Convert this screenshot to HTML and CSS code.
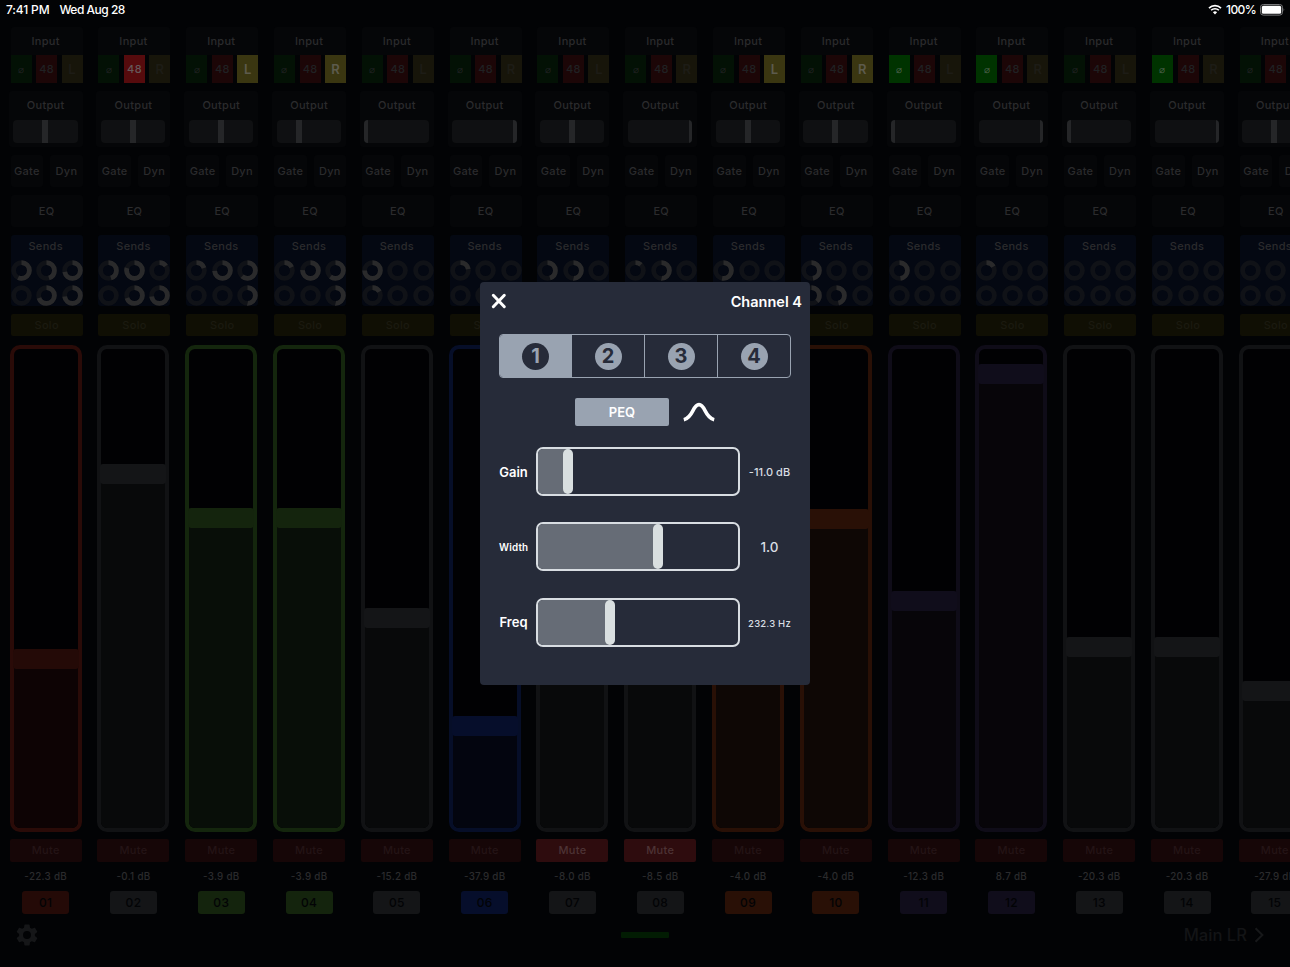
FILE: index.html
```html
<!DOCTYPE html>
<html lang="en">
<head>
    <meta charset="UTF-8">
    <meta name="viewport" content="width=device-width, initial-scale=1.0">
    <title>Mixer</title>
    <link rel="stylesheet" href="styles.css">
</head>
<body>
    <!-- Status bar -->
    <div class="status-bar">
        <span>7:41 PM</span>
        <span class="date">Wed Aug 28</span>
        <svg class="wifi" viewBox="0 0 14 11" width="14" height="11">
            <path d="M1 4.1 A8.6 8.6 0 0 1 13 4.1" fill="none" stroke="#fff" stroke-width="1.7"/>
            <path d="M3.1 6.3 A5.6 5.6 0 0 1 10.9 6.3" fill="none" stroke="#fff" stroke-width="1.6"/>
            <path d="M4.9 8.2 A3 3 0 0 1 9.1 8.2 L7 10.4 Z" fill="#fff"/>
        </svg>
        <span class="percent">100%</span>
        <svg viewBox="0 0 25 12" width="25" height="12">
            <rect x="0.5" y="0.5" width="22" height="10.6" rx="2.8" fill="none" stroke="#77787a"/>
            <rect x="1.8" y="1.8" width="19.4" height="8" rx="1.6" fill="#fff"/>
            <path d="M23.6 4 Q25 5.8 23.6 7.6 Z" fill="#77787a"/>
        </svg>
    </div>

    <!-- Channel strips -->
    <div class="mixer" id="mixer"></div>

    <div class="footer">
        <svg class="gear" viewBox="2 2 20 20" width="22" height="22">
            <path fill="#151618" d="M19.14 12.94c.04-.3.06-.61.06-.94 0-.32-.02-.64-.07-.94l2.03-1.58c.18-.14.23-.41.12-.61l-1.92-3.32c-.12-.22-.37-.29-.59-.22l-2.39.96c-.5-.38-1.03-.7-1.62-.94L14.4 2.81c-.04-.24-.24-.41-.48-.41h-3.84c-.24 0-.43.17-.47.41L9.25 5.35c-.59.24-1.13.57-1.62.94l-2.39-.96c-.22-.08-.47 0-.59.22L2.74 8.87c-.12.21-.08.47.12.61l2.03 1.58c-.05.3-.09.63-.09.94s.02.64.07.94l-2.03 1.58c-.18.14-.23.41-.12.61l1.92 3.32c.12.22.37.29.59.22l2.39-.96c.5.38 1.03.7 1.62.94l.36 2.54c.05.24.24.41.48.41h3.84c.24 0 .44-.17.47-.41l.36-2.54c.59-.24 1.13-.56 1.62-.94l2.39.96c.22.08.47 0 .59-.22l1.92-3.32c.12-.22.07-.47-.12-.61l-2.01-1.58zM12 15.6a3.6 3.6 0 1 1 0-7.2 3.6 3.6 0 0 1 0 7.2z"/>
        </svg>
        <div class="connection"></div>
        <div class="main-lr">
            <span>Main LR</span>
            <svg viewBox="0 0 10 16" width="10" height="16">
                <path d="M1.5 1.2 L8.4 8 L1.5 14.8" fill="none" stroke="#17181a" stroke-width="2"/>
            </svg>
        </div>
    </div>

    <!-- EQ popup -->
    <div class="modal">
        <div class="modal-header">
            <svg viewBox="0 0 16 16" width="16" height="16">
                <path d="M2.3 2.3 L13.3 13.7 M13.3 2.3 L2.3 13.7" stroke="#fff" stroke-width="3" stroke-linecap="round"/>
            </svg>
            <span>Channel 4</span>
        </div>
        <div class="bands">
            <div class="band active"><span>1</span></div>
            <div class="band"><span>2</span></div>
            <div class="band"><span>3</span></div>
            <div class="band"><span>4</span></div>
        </div>
        <div class="type-row">
            <div class="peq">PEQ</div>
            <svg viewBox="0 0 32 22" width="32" height="22">
                <path d="M0.8 18.7 C10.5 16.5 9.5 3.6 16 3.6 C22.5 3.6 21.5 16.5 31.2 18.7" fill="none" stroke="#fff" stroke-width="3.6"/>
            </svg>
        </div>
        <div class="param">
            <span class="label">Gain</span>
            <div class="slider"><div class="fill" style="width: 30px"></div><div class="thumb"></div></div>
            <span class="value">-11.0 dB</span>
        </div>
        <div class="param">
            <span class="label small">Width</span>
            <div class="slider"><div class="fill" style="width: 120px"></div><div class="thumb"></div></div>
            <span class="value large">1.0</span>
        </div>
        <div class="param">
            <span class="label">Freq</span>
            <div class="slider"><div class="fill" style="width: 72px"></div><div class="thumb"></div></div>
            <span class="value tiny">232.3 Hz</span>
        </div>
    </div>

    <script src="script.js"></script>
</body>
</html>
```

FILE: styles.css
```css
* {
    margin: 0;
    padding: 0;
    box-sizing: border-box;
}

body {
    background: #020305;
    color: #2b2b2d;
    font-family: Inter, "Liberation Sans", sans-serif;
    font-size: 11px;
    font-weight: 500;
    height: 967px;
    overflow: hidden;
    position: relative;
}

.status-bar {
    display: flex;
    align-items: center;
    height: 27px;
    padding: 0 5px 8px 6px;
    color: #fff;
    font-size: 12px;
    letter-spacing: -0.15px;
}

.date {
    margin-left: 10px;
    letter-spacing: -0.5px;
}

.wifi {
    margin-left: auto;
}

.percent {
    margin: 0 4px 0 4px;
    letter-spacing: -0.6px;
}

/* channel strips */
.mixer {
    display: flex;
    gap: 15.8px;
    height: 887px;
    padding-left: 10.7px;
    overflow: hidden;
}

.channel {
    flex: 0 0 72px;
    min-width: 0;
    letter-spacing: 0.3px;
    text-align: center;
    --c: #141517;
    --edge: #111214;
    --fill: #08090a;
}

.red { --c: #240a07; --edge: #2a0b08; --fill: #0d0304; }
.green { --c: #14240d; --edge: #14260d; --fill: #080e08; }
.blue { --c: #060e2b; --edge: #060e28; --fill: #03050f; }
.orange { --c: #291006; --edge: #291006; --fill: #0e0705; }
.purple { --c: #100d1b; --edge: #0f0c18; --fill: #070509; }

.input {
    height: 28px;
    line-height: 28px;
    padding-right: 2px;
    background: #050608;
    border-radius: 3px 3px 0 0;
}

.flags {
    display: flex;
    justify-content: space-between;
    height: 28px;
    line-height: 29px;
    margin-bottom: 8px;
}

.flag {
    width: 21px;
    color: #202123;
}

.phase { background: #031105; font-size: 10px; }
.phantom { background: #1c0607; }
.side { background: #17150a; font-size: 13px; font-weight: 600; color: #1d1c16; }
.phase.on { background: #003300; color: #4c604c; }
.phantom.on { background: #560b0d; color: #66595a; }
.side.on { background: #3a3611; color: #5d5b4d; }

.output {
    height: 56px;
    margin: 0 0 8px -2px;
    padding: 0 4.5px;
    background: #050608;
    border-radius: 3px;
}

.output-label {
    height: 29px;
    line-height: 28px;
}

.pan {
    height: 23px;
    width: 64.5px;
    background: #0f1012;
    border-radius: 4px;
    overflow: hidden;
}

.pan-thumb {
    width: 6px;
    height: 23px;
    background: #252628;
}

.dynamics {
    display: flex;
    justify-content: space-between;
    margin-bottom: 8px;
}

.dynamics div {
    width: 32.5px;
    height: 32px;
    line-height: 32px;
    background: #050608;
    border-radius: 3px;
    white-space: nowrap;
}

.eq {
    height: 32px;
    line-height: 32px;
    margin-bottom: 8px;
    background: #050608;
    border-radius: 3px;
}

.sends {
    height: 71px;
    margin-bottom: 8px;
    background: #040812;
    border-radius: 3px;
}

.sends-label {
    height: 25px;
    line-height: 23px;
    margin-left: -2px;
}

.knobs {
    display: grid;
    grid-template-columns: repeat(3, 21px);
    justify-content: space-between;
    row-gap: 4.4px;
}

.knobs svg {
    display: block;
}

.solo {
    height: 22px;
    line-height: 22px;
    margin-bottom: 9px;
    background: #100f04;
    border-radius: 2px;
    color: #1b1a10;
}

.fader {
    width: 72px;
    height: 487px;
    margin-left: -1px;
    margin-bottom: 7px;
    border: 4px solid var(--edge);
    border-radius: 10px;
    background: #010103;
    display: flex;
    flex-direction: column;
    justify-content: flex-end;
}

.fader-thumb {
    flex: none;
    height: 20px;
    margin: 0 -1px;
    border-radius: 3px;
    background: var(--c);
}

.fader-fill {
    background: var(--fill);
    border-radius: 0 0 6px 6px;
}

.mute {
    width: 72px;
    height: 23px;
    line-height: 23px;
    margin-left: -1px;
    background: #160607;
    border-radius: 2px;
    color: #241416;
}

.mute.on {
    background: #2e0c0e;
    color: #4d3335;
}

.db {
    height: 29px;
    line-height: 30px;
    margin-left: -2px;
    font-size: 9.8px;
}

.number {
    width: 47px;
    height: 23px;
    line-height: 24px;
    margin-left: 11.5px;
    border-radius: 3px;
    background: var(--c);
    color: #020305;
    font-size: 12px;
}

.footer {
    display: grid;
    grid-template-columns: 1fr 48px 1fr;
    align-items: center;
    height: 42px;
    padding: 0 26px;
}

.gear {
    margin-left: -10px;
}

.connection {
    height: 6px;
    background: #021c03;
    border-radius: 1px;
}

.main-lr {
    display: flex;
    justify-content: flex-end;
    align-items: center;
    gap: 7px;
    color: #131416;
    font-size: 16.6px;
}

/* EQ popup */
.modal {
    position: absolute;
    left: 480px;
    top: 282px;
    width: 330px;
    height: 403px;
    padding: 0 19px;
    background: #262b39;
    border-radius: 4px;
    color: #fff;
}

.modal-header {
    display: flex;
    justify-content: space-between;
    align-items: center;
    height: 38px;
    margin: 0 -11px 14px -8px;
    font-size: 14.5px;
    font-weight: 600;
}

.bands {
    display: flex;
    height: 44px;
    border: 1px solid #99a3b1;
    border-radius: 4px;
    overflow: hidden;
}

.band {
    flex: 1;
    display: flex;
    align-items: center;
    justify-content: center;
    border-left: 1px solid #99a3b1;
}

.band:first-child {
    flex: 0 0 71px;
    border-left: none;
}

.band span {
    width: 27px;
    height: 27px;
    line-height: 27px;
    border-radius: 50%;
    background: #99a3b1;
    color: #262b39;
    font-size: 20px;
    font-weight: 700;
    text-align: center;
}

.band.active {
    background: #99a3b1;
}

.band.active span {
    background: #262b39;
    color: #99a3b1;
}

.type-row {
    display: flex;
    align-items: center;
    justify-content: center;
    gap: 14px;
    height: 28px;
    margin: 20px 0 21px;
}

.peq {
    width: 94px;
    height: 28px;
    line-height: 28px;
    background: #99a3b1;
    border-radius: 2px;
    font-size: 13px;
    font-weight: 600;
    text-align: center;
}

.param {
    display: grid;
    grid-template-columns: 29px 204px 43px;
    column-gap: 8px;
    align-items: center;
    height: 49px;
    margin-bottom: 26.4px;
    text-align: center;
    white-space: nowrap;
}

.label {
    font-size: 13px;
    font-weight: 600;
}

.label.small {
    padding-top: 2px;
    font-size: 9.8px;
    letter-spacing: 0.2px;
}

.slider {
    display: flex;
    height: 49px;
    border: 2px solid #d8dde2;
    border-radius: 7px;
}

.fill {
    background: #666c76;
    border-radius: 5px 0 0 5px;
}

/* thumb is centered on the end of the fill */
.thumb {
    width: 10px;
    margin-left: -5px;
    border-radius: 5px;
    background: #d9dfe0;
}

.value {
    font-size: 11px;
    color: #d8dde2;
}

.value.large {
    font-size: 13.5px;
}

.value.tiny {
    padding-top: 2px;
    font-size: 9.5px;
    letter-spacing: 0.2px;
}
```

FILE: script.js
```js
// level = height of the fader fill in px, pan = thumb offset in px
const channels = [
    { db: "-22.3 dB", color: "red", level: 159, pan: 29, sends: [57, 45, 72, 0, 70, 73] },
    { db: "-0.1 dB", color: "", level: 344, pan: 29, phantom: true, sends: [45, 80, 15, 0, 70, 73] },
    { db: "-3.9 dB", color: "green", level: 300, pan: 29, side: true, sends: [20, 74, 62, 0, 0, 50] },
    { db: "-3.9 dB", color: "green", level: 300, pan: 19, side: true, sends: [18, 76, 61, 0, 0, 50] },
    { db: "-15.2 dB", color: "", level: 200, pan: -2, sends: [75, 0, 0, 17, 0, 0] },
    { db: "-37.9 dB", color: "blue", level: 92, pan: 61, sends: [22, 0, 0, 0, 0, 0] },
    { db: "-8.0 dB", color: "", level: 250, pan: 29, mute: true, sends: [45, 50, 0, 0, 0, 0] },
    { db: "-8.5 dB", color: "", level: 245, pan: 61, mute: true, sends: [12, 50, 0, 0, 0, 0] },
    { db: "-4.0 dB", color: "orange", level: 299, pan: 29, side: true, sends: [53, 0, 0, 0, 0, 0] },
    { db: "-4.0 dB", color: "orange", level: 299, pan: 29, side: true, sends: [47, 0, 0, 38, 46, 0] },
    { db: "-12.3 dB", color: "purple", level: 217, pan: -2, phase: true, sends: [48, 0, 0, 0, 0, 0] },
    { db: "8.7 dB", color: "purple", level: 444, pan: 61, phase: true, sends: [17, 0, 0, 0, 0, 0] },
    { db: "-20.3 dB", color: "", level: 171, pan: -2, sends: [0, 0, 0, 0, 0, 0] },
    { db: "-20.3 dB", color: "", level: 171, pan: 61, phase: true, sends: [0, 0, 0, 0, 0, 0] },
    { db: "-27.9 dB", color: "", level: 127, pan: 29, sends: [0, 0, 0, 0, 0, 0] }
];

function knob(value) {
    return `<svg viewBox="0 0 21 21" width="21" height="21">
        <circle cx="10.5" cy="10.5" r="7.9" fill="none" stroke="#101217" stroke-width="4.8"/>
        <circle cx="10.5" cy="10.5" r="7.9" fill="none" stroke="#2a2a2b" stroke-width="${value ? 4.8 : 0}"
            pathLength="100" stroke-dasharray="${value} 100" transform="rotate(-90 10.5 10.5)"/>
    </svg>`;
}

function on(flag) {
    return flag ? " on" : "";
}

document.getElementById("mixer").innerHTML = channels.map((ch, i) => `
    <div class="channel ${ch.color}">
        <div class="input">Input</div>
        <div class="flags">
            <div class="flag phase${on(ch.phase)}">⌀</div>
            <div class="flag phantom${on(ch.phantom)}">48</div>
            <div class="flag side${on(ch.side)}">${i % 2 ? "R" : "L"}</div>
        </div>
        <div class="output">
            <div class="output-label">Output</div>
            <div class="pan"><div class="pan-thumb" style="margin-left: ${ch.pan}px"></div></div>
        </div>
        <div class="dynamics"><div>Gate</div><div>Dyn</div></div>
        <div class="eq">EQ</div>
        <div class="sends">
            <div class="sends-label">Sends</div>
            <div class="knobs">${ch.sends.map(knob).join("")}</div>
        </div>
        <div class="solo">Solo</div>
        <div class="fader">
            <div class="fader-thumb"></div>
            <div class="fader-fill" style="height: ${ch.level}px"></div>
        </div>
        <div class="mute${on(ch.mute)}">Mute</div>
        <div class="db">${ch.db}</div>
        <div class="number">${String(i + 1).padStart(2, "0")}</div>
    </div>`).join("");
```
